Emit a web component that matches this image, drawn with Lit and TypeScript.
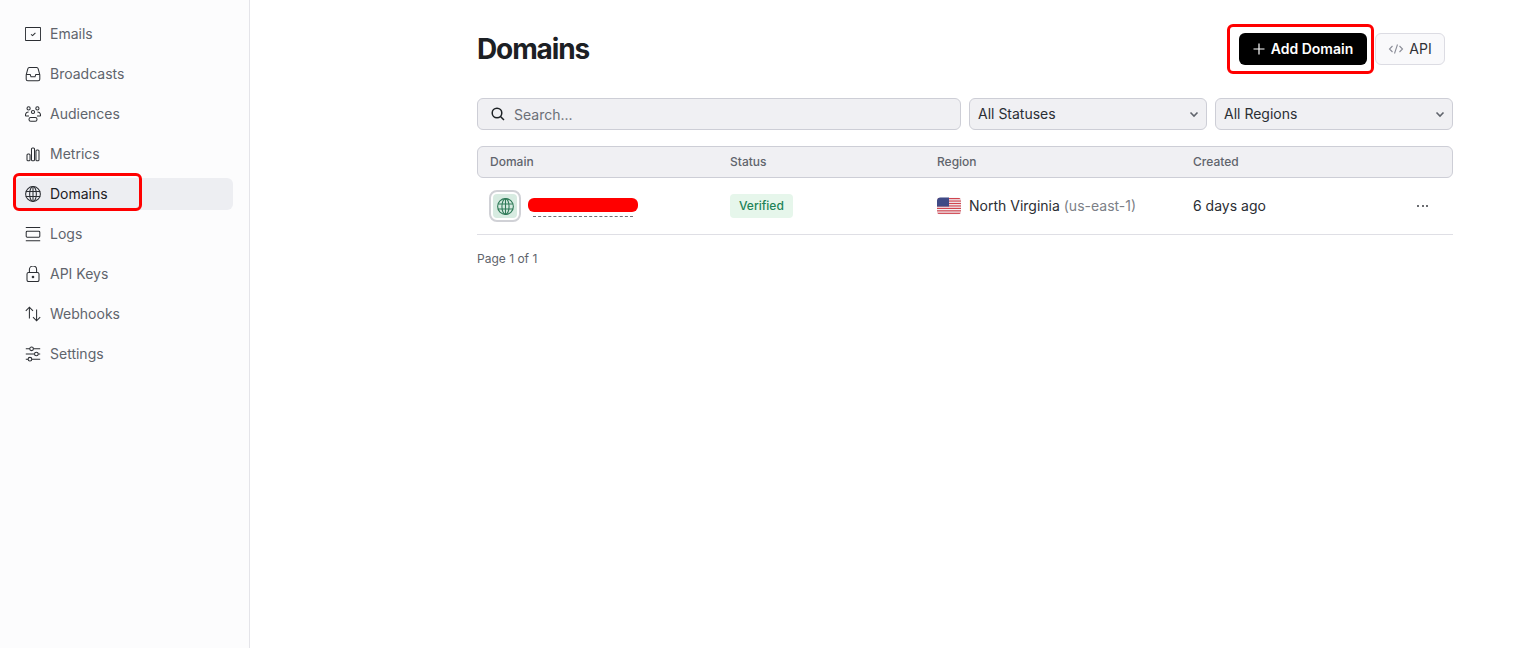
import { LitElement, html, css, svg } from "lit";
import { customElement } from "lit/decorators.js";
import { classMap } from "lit/directives/class-map.js";

const globe = svg`<circle cx="12" cy="12" r="9.25"/><ellipse cx="12" cy="12" rx="4.2" ry="9.25"/><path d="M12 2.75v18.5M3 9h18M3 15h18"/>`;

const icons: Record<string, unknown> = {
  Emails: svg`<rect x="2.500" y="4" width="19" height="16" rx="0.6"/><path d="M9.500 12.500l2 1.500 3.500-3.500"/>`,
  Broadcasts: svg`<path d="M3.500 13l2-7.500A2 2 0 0 1 7.400 4h9.200a2 2 0 0 1 1.900 1.500l2 7.500v5.500a2 2 0 0 1-2 2H5.500a2 2 0 0 1-2-2z"/><path d="M3.500 12.500h5l1 3h5l1-3h5"/>`,
  Audiences: svg`<circle cx="12" cy="9.500" r="2"/><circle cx="6.500" cy="5" r="2"/><circle cx="17.500" cy="5" r="2"/><rect x="7" y="16.500" width="10" height="4.500" rx="2.200"/><path d="M2.500 14.500c0-3 1.500-5 4-5M21.500 14.500c0-3-1.500-5-4-5M2.500 14.500h4.500M21.500 14.500H17"/>`,
  Metrics: svg`<rect x="4.500" y="12" width="3.800" height="8.500" rx="1.300"/><rect x="10.100" y="4.500" width="3.800" height="16" rx="1.300"/><rect x="15.700" y="7" width="3.800" height="13.500" rx="1.300"/>`,
  Domains: globe,
  Logs: svg`<path d="M3 4h18M3 20.500h18"/><rect x="3.500" y="8.500" width="17" height="7.500" rx="1.200"/>`,
  "API Keys": svg`<rect x="4.500" y="10" width="15" height="11.500" rx="2"/><path d="M7.500 10V6.500a4.500 4.500 0 0 1 9 0V10"/><circle cx="12" cy="15.700" r="1" fill="currentColor"/>`,
  Webhooks: svg`<path d="M7.500 17.500V3.500M3 8l4.500-4.500L12 8M16.500 6.500v14M12 16l4.500 4.500L21 16"/>`,
  Settings: svg`<path d="M3 5.500h5M12.500 5.500H21M3 12h11M18.500 12H21M3 18.500h3M10.500 18.500H21"/><circle cx="10.200" cy="5.500" r="2.300"/><circle cx="16.200" cy="12" r="2.300"/><circle cx="8.200" cy="18.500" r="2.300"/>`,
};

const navItems = Object.keys(icons);

@customElement("app-root")
export class AppRoot extends LitElement {
  static styles = css`
    :host {
      display: flex;
      position: relative;
      height: 648px;
      overflow: hidden;
      background: #fff;
      font-family: Inter, "Liberation Sans", sans-serif;
      font-size: 14px;
      line-height: 20px;
      color: #2b2e33;
    }
    * {
      box-sizing: border-box;
    }
    svg {
      display: block;
      flex: none;
    }
    .sidebar {
      flex: none;
      width: 250px;
      padding: 18px 16px 0 14px;
      display: flex;
      flex-direction: column;
      gap: 8px;
      background: #fcfcfd;
      border-right: 1px solid #e4e4e9;
    }
    .nav-item {
      display: flex;
      align-items: center;
      gap: 9px;
      height: 32px;
      padding-left: 11px;
      border-radius: 6px;
      color: #60646c;
    }
    .nav-item.active {
      background: #edeef2;
      color: #1c2024;
    }
    .nav-item svg {
      width: 16px;
      height: 16px;
      fill: none;
      stroke: #2b2e33;
      stroke-width: 1.3;
    }
    main {
      flex: none;
      width: 976px;
      margin-left: 227px;
      padding-top: 33px;
    }
    .page-head {
      display: flex;
      align-items: center;
      justify-content: space-between;
      height: 32px;
      padding-right: 8px;
      margin-bottom: 33px;
    }
    h1 {
      margin: 0;
      font-size: 28px;
      font-weight: 700;
      letter-spacing: -1.12px;
      line-height: 32px;
      color: #1c2024;
    }
    .actions {
      display: flex;
      gap: 8px;
    }
    .btn {
      display: flex;
      align-items: center;
      justify-content: center;
      height: 32px;
      border-radius: 6px;
      font-size: 14px;
    }
    .btn-primary {
      width: 128px;
      gap: 6px;
      background: #000;
      color: #fff;
      font-weight: 600;
    }
    .btn-primary svg {
      width: 12px;
      height: 12px;
      stroke: #fff;
      stroke-width: 1.2;
    }
    .btn-ghost {
      width: 70px;
      gap: 5px;
      background: #f9f9fb;
      border: 1px solid #dcdce3;
      color: #2f3237;
    }
    .btn-ghost svg {
      width: 16px;
      height: 16px;
      fill: none;
      stroke: #8b8d98;
      stroke-width: 1.1;
    }
    .filters {
      display: flex;
      gap: 8px;
      margin-bottom: 16px;
    }
    .field {
      display: flex;
      align-items: center;
      height: 32px;
      background: #f0f0f3;
      border: 1px solid #cdced6;
      border-radius: 6px;
    }
    .search {
      flex: 1;
      gap: 9px;
      padding-left: 13px;
      color: #6b6f77;
    }
    .search span {
      padding-top: 2px;
    }
    .search svg {
      width: 14px;
      height: 14px;
      fill: none;
      stroke: #1c2024;
      stroke-width: 1.5;
    }
    .select {
      flex: none;
      width: 238px;
      justify-content: space-between;
      padding: 0 7px 0 8px;
    }
    .select svg {
      width: 10px;
      height: 10px;
      fill: none;
      stroke: #60646c;
      stroke-width: 1.6;
    }
    .cols {
      display: grid;
      align-items: center;
    }
    .table-head {
      grid-template-columns: 252px 207px 256px 1fr;
      height: 32px;
      background: #f0f0f3;
      border: 1px solid #cdced6;
      border-radius: 6px;
      font-size: 12px;
      line-height: 16px;
      font-weight: 500;
      color: #60646c;
    }
    .table-head > :first-child,
    .row > :first-child {
      padding-left: 12px;
    }
    .row {
      grid-template-columns: 253px 207px 256px 1fr 36px;
      height: 57px;
      border-bottom: 1px solid #dfdfe5;
    }
    .domain {
      display: flex;
      align-items: center;
      gap: 7px;
    }
    .domain-icon {
      display: flex;
      align-items: center;
      justify-content: center;
      width: 32px;
      height: 32px;
      border: 2px solid #d0d1d6;
      border-radius: 8px;
      background: #fff;
    }
    .domain-icon span {
      display: flex;
      align-items: center;
      justify-content: center;
      width: 24px;
      height: 24px;
      border-radius: 4px;
      background: #d7ebe1;
    }
    .domain-icon svg {
      width: 17px;
      height: 17px;
      fill: none;
      stroke: #2f7a58;
      stroke-width: 1.3;
    }
    .domain-name {
      width: 110px;
      margin-top: 2px;
    }
    .redacted {
      height: 14px;
      border-radius: 6px;
      background: #ff0000;
    }
    .dash {
      margin: 4px 5px 0;
      border-top: 1px dashed #6f7278;
    }
    .badge {
      display: inline-flex;
      align-items: center;
      height: 24px;
      padding: 0 9px;
      border-radius: 4px;
      background: #e6f6eb;
      color: #218358;
      font-size: 12px;
      line-height: 16px;
      font-weight: 500;
    }
    .status {
      display: flex;
    }
    .region {
      display: flex;
      align-items: center;
      gap: 8px;
    }
    .region svg {
      width: 24px;
      height: 18px;
    }
    .code {
      color: #7c7f87;
    }
    .more {
      display: flex;
      gap: 2.500px;
    }
    .more i {
      width: 2px;
      height: 2px;
      border-radius: 50%;
      background: #3a3d42;
    }
    .pager {
      margin-top: 17px;
      font-size: 12px;
      line-height: 14px;
      color: #60646c;
    }
    .mark {
      position: absolute;
      border: 3px solid #ff0000;
      border-radius: 6px;
      pointer-events: none;
    }
    .mark-nav {
      left: 13px;
      top: 173px;
      width: 129px;
      height: 38px;
    }
    .mark-add {
      left: 1227px;
      top: 24px;
      width: 147px;
      height: 50px;
    }
  `;

  private renderFlag() {
    const stripes = [0, 1, 2, 3, 4, 5, 6].map(
      (i) => svg`<rect y=${1 + i * 2.45} width="24" height="1.200" fill="#d0444e"/>`,
    );
    return html`<svg viewBox="0 0 24 18">
      <defs><clipPath id="flag"><rect y="0.500" width="24" height="17" rx="3.500"/></clipPath></defs>
      <g clip-path="url(#flag)">
        <rect width="24" height="18" fill="#f2f2f5"/>
        ${stripes}
        <rect width="12" height="9.500" fill="#3f4a86"/>
      </g>
    </svg>`;
  }

  render() {
    return html`
      <nav class="sidebar">
        ${navItems.map(
          (label) => html`
            <div class=${classMap({ "nav-item": true, active: label === "Domains" })}>
              <svg viewBox="2 2 20 20">${icons[label]}</svg>
              <span>${label}</span>
            </div>
          `,
        )}
      </nav>
      <main>
        <div class="page-head">
          <h1>Domains</h1>
          <div class="actions">
            <div class="btn btn-primary">
              <svg viewBox="0 0 12 12"><path d="M6 .5v11M.5 6h11"/></svg>
              <span>Add Domain</span>
            </div>
            <div class="btn btn-ghost">
              <svg viewBox="0 0 16 16"><path d="M4.500 5L1.500 8l3 3M11.500 5l3 3-3 3M9.500 3.500l-3 9"/></svg>
              <span>API</span>
            </div>
          </div>
        </div>
        <div class="filters">
          <div class="field search">
            <svg viewBox="0 0 14 14"><circle cx="6" cy="6" r="4.800"/><path d="M9.500 9.500L13 13"/></svg>
            <span>Search...</span>
          </div>
          ${["All Statuses", "All Regions"].map(
            (label) => html`
              <div class="field select">
                <span>${label}</span>
                <svg viewBox="0 0 10 10"><path d="M1.500 3.500L5 7l3.500-3.500"/></svg>
              </div>
            `,
          )}
        </div>
        <div class="cols table-head">
          <span>Domain</span><span>Status</span><span>Region</span><span>Created</span>
        </div>
        <div class="cols row">
          <div class="domain">
            <div class="domain-icon"><span><svg viewBox="2 2 20 20">${globe}</svg></span></div>
            <div class="domain-name">
              <div class="redacted"></div>
              <div class="dash"></div>
            </div>
          </div>
          <div class="status"><span class="badge">Verified</span></div>
          <div class="region">
            ${this.renderFlag()}
            <span>North Virginia <span class="code">(us-east-1)</span></span>
          </div>
          <div>6 days ago</div>
          <div class="more"><i></i><i></i><i></i></div>
        </div>
        <div class="pager">Page 1 of 1</div>
      </main>
      <div class="mark mark-nav"></div>
      <div class="mark mark-add"></div>
    `;
  }
}
